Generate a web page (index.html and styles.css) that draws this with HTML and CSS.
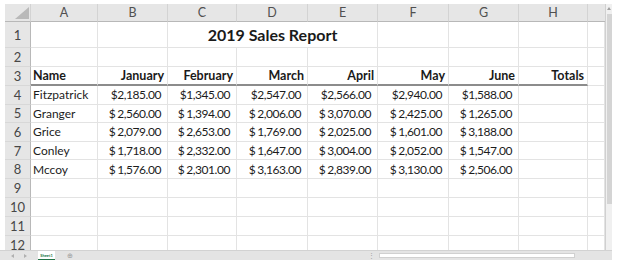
FILE: index.html
```html
<!DOCTYPE html>
<html>
<head>
<meta charset="utf-8">
<link rel="stylesheet" href="styles.css">
</head>
<body>
<div class="app">
  <div class="main">
    <div class="grid">
      <div class="ch corner"><svg width="14" height="12" viewBox="0 0 14 12"><polygon points="14,0 14,12 0,12" fill="#b9b9b9"/></svg></div>
      <div class="ch">A</div><div class="ch">B</div><div class="ch">C</div><div class="ch">D</div><div class="ch">E</div><div class="ch">F</div><div class="ch">G</div><div class="ch">H</div><div class="ch last"></div>

      <div class="rh">1</div><div class="c"></div><div class="c"></div><div class="c title">2019 Sales Report</div><div class="c"></div><div class="c"></div><div class="c"></div><div class="c"></div>

      <div class="rh">2</div><div class="c"></div><div class="c"></div><div class="c"></div><div class="c"></div><div class="c"></div><div class="c"></div><div class="c"></div><div class="c"></div><div class="c"></div>

      <div class="rh">3</div><div class="c t b hd">Name</div><div class="c n b hd">January</div><div class="c n b hd">February</div><div class="c n b hd">March</div><div class="c n b hd">April</div><div class="c n b hd">May</div><div class="c n b hd">June</div><div class="c n b hd">Totals</div><div class="c"></div>

      <div class="rh">4</div><div class="c t">Fitzpatrick</div><div class="c n m">$2,185.00</div><div class="c n m">$1,345.00</div><div class="c n m">$2,547.00</div><div class="c n m">$2,566.00</div><div class="c n m">$2,940.00</div><div class="c n m">$1,588.00</div><div class="c"></div><div class="c"></div>

      <div class="rh">5</div><div class="c t">Granger</div><div class="c n m"><span class="cur">$</span>2,560.00</div><div class="c n m"><span class="cur">$</span>1,394.00</div><div class="c n m"><span class="cur">$</span>2,006.00</div><div class="c n m"><span class="cur">$</span>3,070.00</div><div class="c n m"><span class="cur">$</span>2,425.00</div><div class="c n m"><span class="cur">$</span>1,265.00</div><div class="c"></div><div class="c"></div>

      <div class="rh">6</div><div class="c t">Grice</div><div class="c n m"><span class="cur">$</span>2,079.00</div><div class="c n m"><span class="cur">$</span>2,653.00</div><div class="c n m"><span class="cur">$</span>1,769.00</div><div class="c n m"><span class="cur">$</span>2,025.00</div><div class="c n m"><span class="cur">$</span>1,601.00</div><div class="c n m"><span class="cur">$</span>3,188.00</div><div class="c"></div><div class="c"></div>

      <div class="rh">7</div><div class="c t">Conley</div><div class="c n m"><span class="cur">$</span>1,718.00</div><div class="c n m"><span class="cur">$</span>2,332.00</div><div class="c n m"><span class="cur">$</span>1,647.00</div><div class="c n m"><span class="cur">$</span>3,004.00</div><div class="c n m"><span class="cur">$</span>2,052.00</div><div class="c n m"><span class="cur">$</span>1,547.00</div><div class="c"></div><div class="c"></div>

      <div class="rh">8</div><div class="c t">Mccoy</div><div class="c n m"><span class="cur">$</span>1,576.00</div><div class="c n m"><span class="cur">$</span>2,301.00</div><div class="c n m"><span class="cur">$</span>3,163.00</div><div class="c n m"><span class="cur">$</span>2,839.00</div><div class="c n m"><span class="cur">$</span>3,130.00</div><div class="c n m"><span class="cur">$</span>2,506.00</div><div class="c"></div><div class="c"></div>

      <div class="rh">9</div><div class="c"></div><div class="c"></div><div class="c"></div><div class="c"></div><div class="c"></div><div class="c"></div><div class="c"></div><div class="c"></div><div class="c"></div>

      <div class="rh">10</div><div class="c"></div><div class="c"></div><div class="c"></div><div class="c"></div><div class="c"></div><div class="c"></div><div class="c"></div><div class="c"></div><div class="c"></div>

      <div class="rh">11</div><div class="c"></div><div class="c"></div><div class="c"></div><div class="c"></div><div class="c"></div><div class="c"></div><div class="c"></div><div class="c"></div><div class="c"></div>

      <div class="rh">12</div><div class="c"></div><div class="c"></div><div class="c"></div><div class="c"></div><div class="c"></div><div class="c"></div><div class="c"></div><div class="c"></div><div class="c"></div>
    </div>
    <div class="vscroll">
      <div class="arrow"></div>
      <div class="thumb"></div>
    </div>
  </div>
  <div class="bottom">
    <div class="nav">
      <span class="tri left"></span>
      <span class="tri right"></span>
    </div>
    <div class="tab">Sheet1</div>
    <div class="plus">⊕</div>
    <div class="spacer"></div>
    <div class="dots">⋮</div>
    <div class="hscroll"></div>
    <div class="grip"></div>
  </div>
</div>
</body>
</html>
```
FILE: styles.css
```css
html, body {
  margin: 0;
  padding: 0;
  background: #ffffff;
}

body {
  font-family: Lato, "Open Sans", sans-serif;
  color: #1c1c1c;
}

.app {
  width: 612px;
  height: 260px;
  display: flex;
  flex-direction: column;
  overflow: hidden;
}

.main {
  flex: none;
  height: 250px;
  box-sizing: border-box;
  padding: 4px 0 0 5px;
  display: flex;
  overflow: hidden;
}

.grid {
  flex: none;
  width: 600px;
  height: 246px;
  overflow: hidden;
  display: grid;
  grid-template-columns: 26px 67px 70px 69px 71px 70px 71px 70px 69px 17px;
  grid-template-rows: 18px 26px 19px 19px repeat(5, 18.6px) repeat(4, 19px);
}

.ch {
  background: #e6e6e6;
  border-right: 1px solid #d3d3d3;
  border-bottom: 1px solid #b8b8b8;
  box-sizing: border-box;
  display: flex;
  align-items: center;
  justify-content: center;
  font-size: 12.5px;
  color: #505050;
}

.ch.last {
  border-right: none;
}

.corner {
  justify-content: flex-end;
  align-items: flex-end;
  padding: 0 1px 2px 0;
}

.corner svg {
  display: block;
}

.rh {
  background: #e6e6e6;
  border-right: 1px solid #b8b8b8;
  border-bottom: 1px solid #d8d8d8;
  box-sizing: border-box;
  display: flex;
  align-items: center;
  justify-content: center;
  font-size: 13px;
  color: #474747;
}

.c {
  border-right: 1px solid #e3e3e3;
  border-bottom: 1px solid #e3e3e3;
  box-sizing: border-box;
  display: flex;
  align-items: center;
  font-size: 12px;
  white-space: nowrap;
  overflow: hidden;
  min-width: 0;
}

.t {
  justify-content: flex-start;
  padding-left: 2px;
}

.n {
  justify-content: flex-end;
  padding-right: 3px;
}

.m {
  letter-spacing: -0.45px;
  padding-right: 6px;
}

.cur {
  margin-right: 2px;
}

.b {
  font-weight: 700;
  font-size: 12.5px;
  color: #1a1a1a;
}

.hd {
  border-bottom: 2px solid #8c8c8c;
}

.title {
  grid-column: span 3;
  justify-content: center;
  font-weight: 700;
  font-size: 16px;
  color: #1a1a1a;
}

.vscroll {
  flex: none;
  width: 7px;
  box-sizing: border-box;
  background: #f0f0f0;
  border-left: 1px solid #d0d0d0;
  display: flex;
  flex-direction: column;
  align-items: center;
}

.arrow {
  width: 0;
  height: 0;
  margin-top: 3px;
  border-left: 2px solid transparent;
  border-right: 2px solid transparent;
  border-bottom: 3px solid #a0a0a0;
}

.thumb {
  margin-top: 4px;
  width: 5px;
  height: 190px;
  background: #d4d4d4;
}

.bottom {
  flex: none;
  height: 10px;
  background: #e4e4e4;
  border-top: 1px solid #d2d2d2;
  box-sizing: border-box;
  display: flex;
  align-items: stretch;
}

.nav {
  width: 38px;
  display: flex;
  align-items: center;
  justify-content: space-around;
  padding: 0 6px;
  box-sizing: border-box;
}

.tri {
  width: 0;
  height: 0;
  border-top: 2px solid transparent;
  border-bottom: 2px solid transparent;
}

.tri.left {
  border-right: 3px solid #b0b0b0;
}

.tri.right {
  border-left: 3px solid #b0b0b0;
}

.tab {
  width: 17px;
  background: #ffffff;
  border-bottom: 1px solid #217346;
  box-sizing: border-box;
  font-size: 4px;
  color: #217346;
  font-weight: 700;
  display: flex;
  align-items: center;
  justify-content: center;
}

.plus {
  margin-left: 12px;
  font-size: 7px;
  line-height: 9px;
  color: #9a9a9a;
}

.spacer {
  flex: 1;
}

.dots {
  font-size: 7px;
  line-height: 9px;
  color: #a0a0a0;
  margin-right: 4px;
}

.hscroll {
  width: 196px;
  margin: 2px 0;
  background: #ffffff;
  border: 1px solid #d0d0d0;
  box-sizing: border-box;
}

.grip {
  width: 37px;
}
```
